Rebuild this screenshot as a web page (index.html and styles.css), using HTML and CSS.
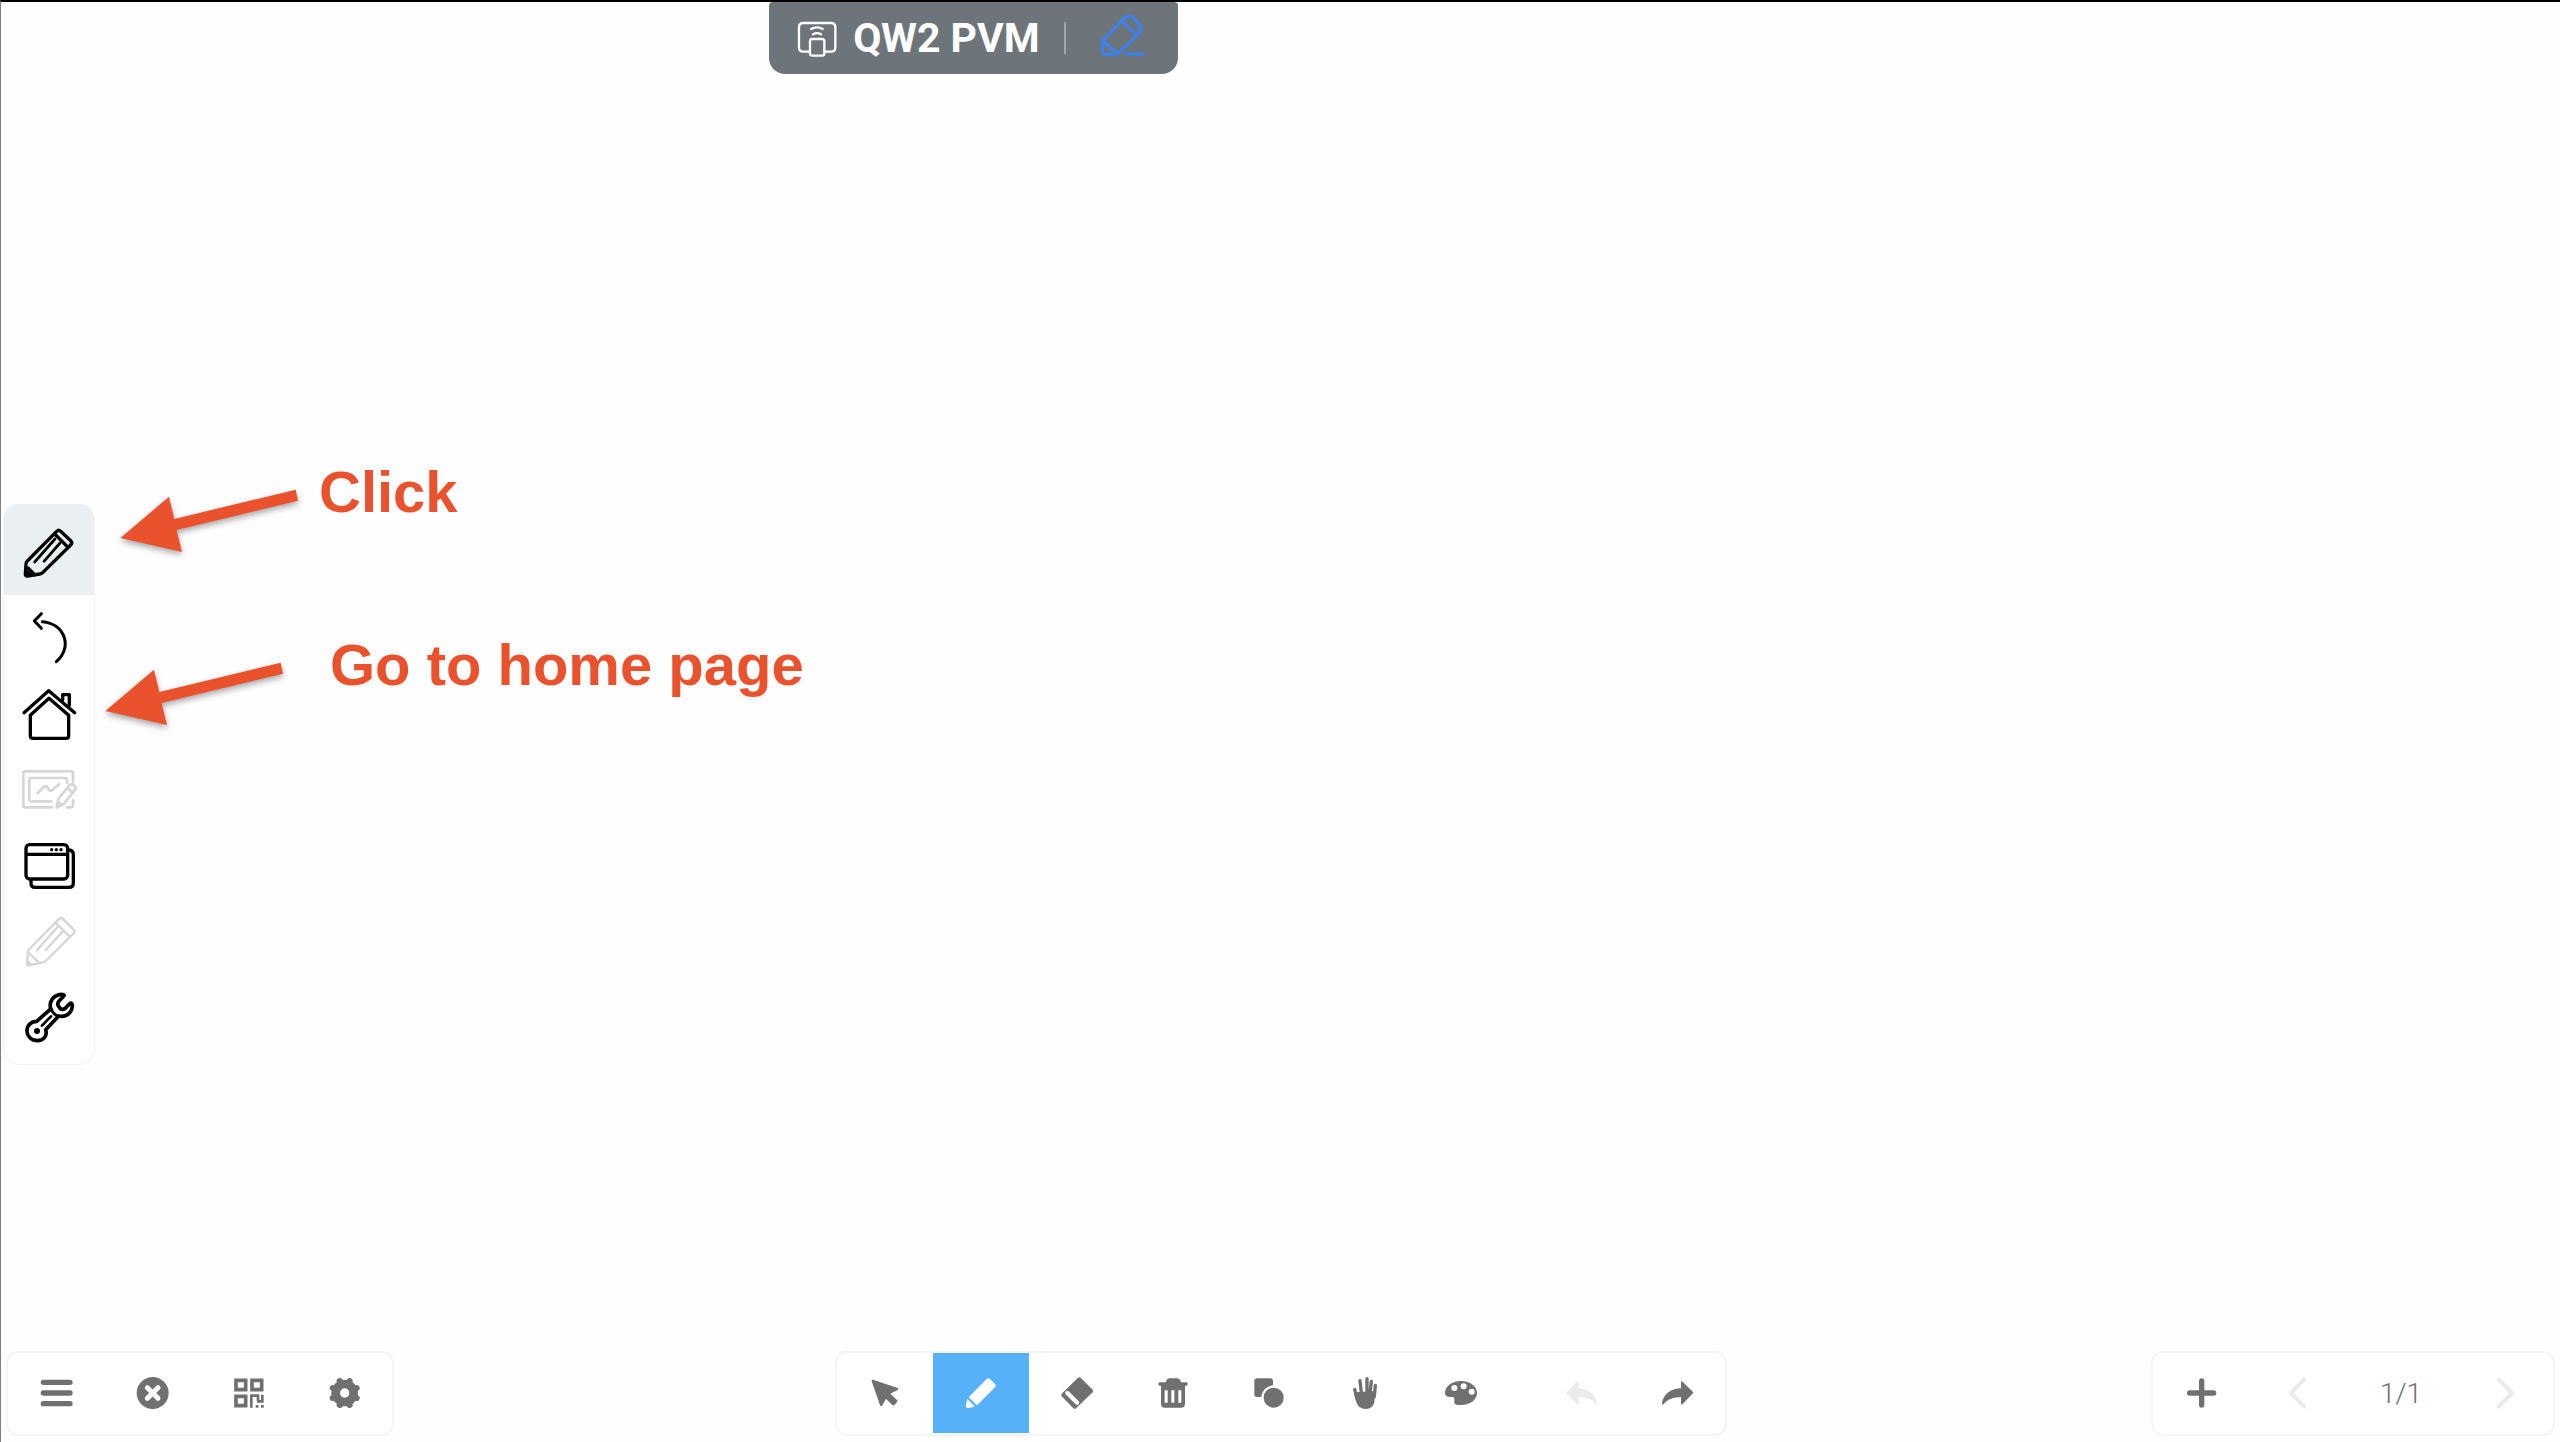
FILE: index.html
```html
<!DOCTYPE html>
<html lang="en">
<head>
<meta charset="utf-8">
<title>QW2 PVM</title>
<link rel="stylesheet" href="styles.css">
</head>
<body>
<div class="app">
  <header class="topbar">
    <div class="room-tab">
      <svg class="tab-icon" viewBox="154 42 144 144" aria-hidden="true">
        <g fill="none" stroke="#fff" stroke-width="7" stroke-linecap="round" stroke-linejoin="round">
          <path d="M202 155h-17q-13 0-13-13V82q0-13 13-13h83q13 0 13 13v60q0 13-13 13h-17"/>
          <rect x="205" y="117" width="43" height="50" rx="7"/>
          <path d="M208 87q18-10 35 0M214 103q12-7 24 0"/>
        </g>
      </svg>
      <h1 class="room-name">QW2 PVM</h1>
      <span class="tab-divider"></span>
      <button class="tab-edit" type="button" aria-label="Edit">
        <svg class="tab-icon" viewBox="1073 42 144 144" aria-hidden="true">
          <g fill="none" stroke="#3a82f7" stroke-width="9" stroke-linecap="round" stroke-linejoin="round">
            <path d="M1086 124l66-71q5-4 11-4h8q5 0 9 5l17 20q4 5 4 11v5q0 5-4 9l-62 60q-4 4-9 4h-32q-7 0-7-7v-25q0-5 3-8z"/>
            <path d="M1144 62l42 40M1090 124l41 36M1158 162h49"/>
          </g>
        </svg>
      </button>
    </div>
  </header>

  <main class="board">
    <nav class="side-tools" aria-label="Tools">
      <button class="side-button active" type="button" aria-label="Pen">
        <svg class="side-icon" viewBox="57 118 180 180" aria-hidden="true">
          <g fill="none" stroke="#000" stroke-width="10" stroke-linecap="round" stroke-linejoin="round">
            <path d="M82 241l88-89q6-6 12 0l31 29q5 6-1 12l-84 83q-4 3-9 4l-37 6q-6 1-6-6l2-30q0-6 4-9z"/>
            <path d="M164 160l38 38M84 262l20 20"/>
            <path d="M165 175l-61 69M180 187l-48 55" stroke-width="8"/>
          </g>
          <path d="M78 286l2-20 19 17z"/>
        </svg>
      </button>
      <button class="side-button" type="button" aria-label="Back">
        <svg class="side-icon" viewBox="57 54 180 180" aria-hidden="true">
          <path d="M124 71l-21 22 21 22M127 95c32 3 57 20 66 48 8 26-2 53-24 72" fill="none" stroke="#000" stroke-width="9" stroke-linecap="round" stroke-linejoin="round"/>
        </svg>
      </button>
      <button class="side-button" type="button" aria-label="Home">
        <svg class="side-icon" viewBox="57 282 180 180" aria-hidden="true">
          <g fill="none" stroke="#000" stroke-width="10" stroke-linecap="round" stroke-linejoin="round">
            <path d="M72 368l74-66 78 66M91 376l56-51 59 51v61q0 8-8 8H99q-8 0-8-8zM188 330v-16h20v32"/>
          </g>
        </svg>
      </button>
      <button class="side-button" type="button" aria-label="Annotate image" disabled>
        <svg class="side-icon" viewBox="57 60 180 180" aria-hidden="true">
          <g fill="none" stroke="#d6d6d6" stroke-width="8" stroke-linecap="round" stroke-linejoin="round">
            <path d="M156 202H76q-6 0-6-6v-96q0-6 6-6h137q6 0 6 6v25M219 180v16q0 6-6 6h-13"/>
            <path d="M154 184H94q-6 0-6-6v-58q0-6 6-6h101q6 0 6 6v8"/>
            <path d="M113 160l18-19q6-6 11 1l5 7q5 7 11 0l20-17"/>
            <path d="M175 177l33-41q6-6 12-1l4 4q6 5 0 12l-33 41-21 11zM202 143l16 15"/>
          </g>
          <path d="M173 180l18 13-22 11z" fill="#d6d6d6"/>
        </svg>
      </button>
      <button class="side-button" type="button" aria-label="Windows">
        <svg class="side-icon" viewBox="57 288 180 180" aria-hidden="true">
          <g fill="none" stroke="#000" stroke-width="10" stroke-linecap="round" stroke-linejoin="round">
            <rect x="78" y="314" width="125" height="103" rx="11"/>
            <path d="M79 343h123M206 330q14 1 14 14v85q0 13-13 13H105q-12 0-12-13v-8"/>
          </g>
          <circle cx="155" cy="329" r="5"/><circle cx="169" cy="329" r="5"/><circle cx="183" cy="329" r="5"/>
        </svg>
      </button>
      <button class="side-button" type="button" aria-label="Marker" disabled>
        <svg class="side-icon" viewBox="57 36 180 180" aria-hidden="true">
          <g fill="none" stroke="#d6d6d6" stroke-width="7" stroke-linecap="round" stroke-linejoin="round">
            <path d="M88 147l90-91q5-5 10 0l34 34q5 5-1 10l-84 83q-4 4-9 4l-41 9q-6 1-6-5l3-35q0-5 4-9z"/>
            <path d="M166 68l42 41M172 82l-61 69M188 95l-51 55M88 161l26 24"/>
          </g>
          <path d="M81 199l3-19 16 14z" fill="#d6d6d6"/>
        </svg>
      </button>
      <button class="side-button" type="button" aria-label="Settings tools">
        <svg class="side-icon" viewBox="57 264 180 180" aria-hidden="true">
          <g fill="none" stroke="#000" stroke-width="11" stroke-linecap="round" stroke-linejoin="round">
            <path d="M110 364l42-37c-6-22 8-42 32-44q14 0 5 8l-12 12q-6 7-2 15l6 8q7 5 15-1l12-13q9-7 9 5c-1 22-19 36-41 31l-39 41c6 20-7 33-25 33-20 0-32-16-31-31 1-16 13-27 29-27z"/>
            <path d="M154 328q6 16 22 21" stroke-width="9"/>
            <path d="M153 349l-27 28" stroke-width="8"/>
          </g>
          <circle cx="111" cy="393" r="9"/>
        </svg>
      </button>
    </nav>
  </main>

  <footer class="bottom-bar">
    <div class="panel">
      <button class="tool" type="button" aria-label="Menu">
        <svg class="tool-icon" viewBox="108 102 120 120" aria-hidden="true"><path d="M130 130h80M130 162h80M130 194h80" fill="none" stroke="#707070" stroke-width="16" stroke-linecap="round"/></svg>
      </button>
      <button class="tool" type="button" aria-label="Close">
        <svg class="tool-icon" viewBox="396 102 120 120" aria-hidden="true"><circle cx="458" cy="162" r="48" fill="#707070"/><path d="M442 146l32 32M474 146l-32 32" fill="none" stroke="#fff" stroke-width="15" stroke-linecap="round"/></svg>
      </button>
      <button class="tool" type="button" aria-label="QR code">
        <svg class="tool-icon" viewBox="684 102 120 120" aria-hidden="true">
          <g fill="none" stroke="#707070">
            <path stroke-width="11" d="M708 124h29v28h-29zM756 124h29v28h-29zM708 172h29v28h-29z"/>
            <path stroke-width="8" d="M754 206v-36h20v15M771 187h16v-20M767 202h8M783 202h8"/>
          </g>
        </svg>
      </button>
      <button class="tool" type="button" aria-label="Settings">
        <svg class="tool-icon" viewBox="972 102 120 120" aria-hidden="true"><g transform="translate(1034 162)"><circle r="40" fill="#707070"/><path d="M-36-15L36 15M-36 15L36-15M-15-36L15 36M15-36L-15 36" stroke="#707070" stroke-width="18" stroke-linecap="round"/><circle r="14" fill="#fff"/></g></svg>
      </button>
    </div>

    <div class="panel">
      <button class="tool" type="button" aria-label="Select">
        <svg class="tool-icon" viewBox="132 102 120 120" aria-hidden="true"><path d="M156 122l74 25q5 3 0 6l-22 11 20 19q3 3 0 6l-7 8q-4 4-8 0l-18-18-11 20q-4 6-7-1l-25-71q-1-6 4-5z" fill="#707070"/></svg>
      </button>
      <button class="tool selected" type="button" aria-label="Pen">
        <svg class="tool-icon" viewBox="420 102 120 120" aria-hidden="true"><path d="M443 175l54-55q5-5 10 0l15 15q5 5 0 10l-54 54zM439 180l22 22q-9 5-21 5-5 0-5-5 0-12 4-22z" fill="#fff"/></svg>
      </button>
      <button class="tool" type="button" aria-label="Eraser">
        <svg class="tool-icon" viewBox="708 102 120 120" aria-hidden="true"><path d="M771 116q4-3 8 0l36 36q3 4 0 8l-50 48q-4 3-8 0l-35-36q-3-4 0-8z" fill="#707070"/><path d="M735 157q4-4 8 0l30 30q4 4 0 8-4 5-9 1l-30-30q-4-4 1-9z" fill="#fff"/></svg>
      </button>
      <button class="tool" type="button" aria-label="Delete">
        <svg class="tool-icon" viewBox="996 102 120 120" aria-hidden="true"><path d="M1016 130h18l3-7q2-5 8-5h24q6 0 8 5l3 7h17q3 0 3 5t-3 5h-5v54q0 12-12 12h-48q-12 0-12-12v-54h-4q-4 0-4-5t4-5z" fill="#707070"/><path d="M1031 154h9v37h-9zM1051 154h9v37h-9zM1072 154h9v37h-9z" fill="#fff"/></svg>
      </button>
      <button class="tool" type="button" aria-label="Shapes">
        <svg class="tool-icon" viewBox="1284 102 120 120" aria-hidden="true"><rect x="1300" y="118" width="56" height="56" rx="8" fill="#707070"/><circle cx="1358" cy="176" r="37" fill="#fff"/><circle cx="1358" cy="176" r="30" fill="#707070"/></svg>
      </button>
      <button class="tool" type="button" aria-label="Pan">
        <svg class="tool-icon" viewBox="252 102 120 120" aria-hidden="true">
          <path d="M285 160l59-4-4 33q-4 21-26 21-22 0-28-20l-7-24z" fill="#707070"/>
          <path d="M281 151l8 30M297 125l4 36M318 119v42M331 127l-4 34M343 139l-3 34" fill="none" stroke="#707070" stroke-width="10" stroke-linecap="round"/>
        </svg>
      </button>
      <button class="tool" type="button" aria-label="Colors">
        <svg class="tool-icon" viewBox="540 102 120 120" aria-hidden="true"><path d="M600 126c27 0 48 15 48 36s-21 36-48 36c-12 0-20-1-20-6v-13q0-6-7-5c-14 1-21-4-21-12 0-21 21-36 48-36z" fill="#707070"/><g fill="#fff"><circle cx="580" cy="147" r="9"/><circle cx="608" cy="142" r="9"/><circle cx="632" cy="158" r="9"/></g></svg>
      </button>
      <button class="tool tool-gap" type="button" aria-label="Undo" disabled>
        <svg class="tool-icon" viewBox="900 102 120 120" aria-hidden="true"><path d="M917 159l30-31q5-4 5 2v18c30 1 53 18 56 45q-1 5-5 1c-12-14-29-19-51-20v20q-1 5-5 1l-30-32q-2-2 0-4z" fill="#ebebeb"/></svg>
      </button>
      <button class="tool" type="button" aria-label="Redo">
        <svg class="tool-icon" viewBox="1188 102 120 120" aria-hidden="true"><path d="M1296 159l-31-31q-5-4-5 2v18c-31 1-54 18-57 45q0 7 6 1c12-14 29-19 51-20v20q1 5 5 1l31-32q2-2 0-4z" fill="#707070"/></svg>
      </button>
    </div>

    <div class="panel">
      <button class="tool" type="button" aria-label="Add page">
        <svg class="tool-icon" viewBox="150 102 120 120" aria-hidden="true"><path d="M212 126v72M176 162h72" fill="none" stroke="#707070" stroke-width="16" stroke-linecap="round"/></svg>
      </button>
      <button class="tool" type="button" aria-label="Previous page" disabled>
        <svg class="tool-icon" viewBox="438 102 120 120" aria-hidden="true"><path d="M520 121l-41 41 41 41" fill="none" stroke="#ebebeb" stroke-width="12" stroke-linecap="round" stroke-linejoin="round"/></svg>
      </button>
      <span class="page-count">1/1</span>
      <button class="tool" type="button" aria-label="Next page" disabled>
        <svg class="tool-icon" viewBox="1062 102 120 120" aria-hidden="true"><path d="M1103 121l41 41-41 41" fill="none" stroke="#ebebeb" stroke-width="12" stroke-linecap="round" stroke-linejoin="round"/></svg>
      </button>
    </div>
  </footer>

  <div class="note note-click">
    <svg class="arrow" viewBox="348 0 558 240" aria-hidden="true"><path d="M361 174L507 50l16 67 364-88 7 33-364 88 16 66z" fill="#ea522d"/></svg>
    <span>Click</span>
  </div>
  <div class="note note-home">
    <svg class="arrow" viewBox="348 0 558 240" aria-hidden="true"><path d="M361 174L507 50l16 67 364-88 7 33-364 88 16 66z" fill="#ea522d"/></svg>
    <span>Go to home page</span>
  </div>
</div>
</body>
</html>
```
FILE: styles.css
```css
* {
  box-sizing: border-box;
}

body {
  margin: 0;
  font-family: Roboto, "Liberation Sans", sans-serif;
  color: #707070;
  background: #fefefe;
}

button {
  display: flex;
  align-items: center;
  justify-content: center;
  margin: 0;
  padding: 0;
  border: 0;
  background: none;
}

svg {
  display: block;
  flex: none;
}

.app {
  position: relative;
  display: flex;
  flex-direction: column;
  min-height: 100vh;
  border-top: 2px solid #000;
  border-left: 1px solid #808080;
}

/* Room tab */
.topbar {
  display: flex;
  justify-content: center;
  padding-right: 24%;
}

.room-tab {
  display: flex;
  align-items: center;
  height: 72px;
  padding: 0 32px 0 24px;
  border-radius: 4px 4px 16px 16px;
  background: #6d757b;
}

.tab-icon {
  width: 48px;
  height: 48px;
}

.room-name {
  margin: 0 0 0 12px;
  font-size: 41px;
  line-height: 48px;
  font-weight: 700;
  color: #fff;
}

.tab-divider {
  width: 2px;
  height: 32px;
  margin: 0 32px 0 24px;
  background: #a2a7ab;
}

/* Side toolbar */
.board {
  flex: 1;
  padding: 430px 0 0 2px;
}

.side-tools {
  width: 92px;
  padding-bottom: 8px;
  border: 1px solid #f3f3f3;
  border-top: 0;
  border-radius: 16px;
  background: #fff;
}

.side-button {
  width: 100%;
  height: 76px;
}

.side-button.active {
  height: 91px;
  margin-bottom: 5px;
  border-radius: 14px 14px 0 0;
  background: #eaeff2;
}

.side-icon {
  width: 60px;
  height: 60px;
}

/* Bottom toolbars */
.bottom-bar {
  display: grid;
  grid-template-columns: 1fr auto 1fr;
  padding: 0 5px 6px 5px;
}

.panel {
  display: flex;
  justify-self: start;
  border: 2px solid #f5f5f5;
  border-radius: 12px;
  background: #fff;
}

.panel:last-child {
  justify-self: end;
}

.tool {
  width: 96px;
  height: 80px;
}

.tool.selected {
  background: #57b1f9;
}

.tool-gap {
  margin-left: 24px;
}

.tool-icon {
  width: 40px;
  height: 40px;
}

.page-count {
  width: 112px;
  padding-top: 1px;
  font-size: 28px;
  line-height: 80px;
  font-weight: 300;
  text-align: center;
}

/* Notes drawn on the board */
.note {
  position: absolute;
  display: flex;
  align-items: flex-start;
  font-family: "Liberation Sans", sans-serif;
  font-size: 58px;
  line-height: 64px;
  font-weight: 700;
  color: #ea522d;
}

.note-click {
  top: 458px;
  left: 115px;
  gap: 17px;
}

.note-home {
  top: 631px;
  left: 100px;
  gap: 43px;
}

.arrow {
  width: 186px;
  height: 80px;
  margin-top: 20px;
  overflow: visible;
  filter: drop-shadow(0 3px 3px rgba(0, 0, 0, 0.35));
}
```
